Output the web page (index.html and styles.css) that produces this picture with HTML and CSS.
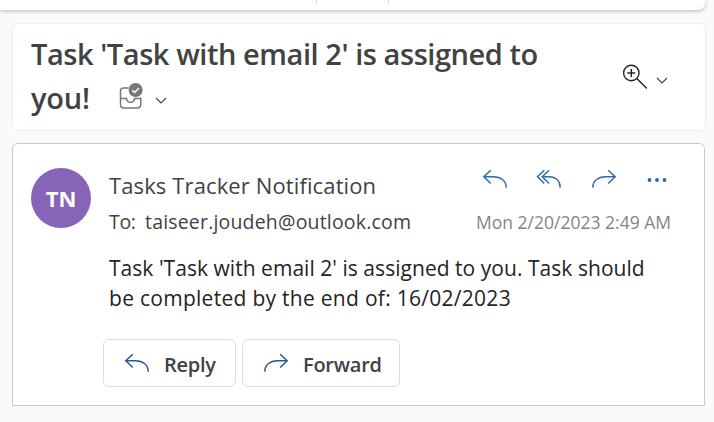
FILE: index.html
```html
<!DOCTYPE html>
<html lang="en">
<head>
<meta charset="utf-8">
<title>Mail</title>
<link rel="stylesheet" href="styles.css">
</head>
<body>
<svg class="defs" width="0" height="0" aria-hidden="true">
  <symbol id="reply" viewBox="0 0 26 20"><path d="M8.8 1.2 1.8 7.7 8.8 14.5M2 7.7H11.5C18.5 7.7 24.2 11.5 24.2 18.7"/></symbol>
  <symbol id="reply-all" viewBox="0 0 26 20"><path d="M8.2 1.2 1.5 7.7 8.2 14.5M13 1.2 6.3 7.7 13 14.5M6.5 7.7H13C19.5 7.7 24.2 11.5 24.2 18.7"/></symbol>
  <symbol id="forward" viewBox="0 0 26 20"><path d="M17.2 1.2 24.2 7.7 17.2 14.5M24 7.7H14.5C7.5 7.7 1.8 11.5 1.8 18.7"/></symbol>
  <symbol id="chevron" viewBox="0 0 12 8"><path d="M1 1 6 6 11 1"/></symbol>
</svg>
<div class="toolbar"><span class="divider"></span><span class="divider"></span></div>
<header class="subject">
  <h1 class="title">
    <span class="title-first">Task 'Task with email 2' is assigned to</span>
    <span class="title-row"><span class="title-last">you!</span>
      <svg class="inbox" viewBox="0 0 26 28"><path d="M10.5 6H5.5Q2.500 6 2.500 9V22.500Q2.500 26 6 26H19Q22.800 26 22.800 22.500V15.500M2.500 16.500H8.500C9 21.500 16 21.500 16.500 16.500H22.500"/><circle cx="17.600" cy="8" r="7"/><path class="tick" d="M14.200 8.200 16.600 10.500 21 6"/></svg>
      <svg class="chevron" viewBox="0 0 12 8"><use href="#chevron"/></svg>
    </span>
  </h1>
  <div class="zoom">
    <svg class="magnifier" viewBox="0 0 26 26"><circle cx="9.300" cy="9" r="7.700"/><path d="M9.300 5V13M5.300 9H13.300M14.800 14.500 24.800 24.500"/></svg>
    <svg class="chevron" viewBox="0 0 12 8"><use href="#chevron"/></svg>
  </div>
</header>
<main class="message">
  <div class="avatar">TN</div>
  <div class="content">
    <div class="line top">
      <span class="sender">Tasks Tracker Notification</span>
      <div class="actions">
        <svg class="arrow"><use href="#reply"/></svg>
        <svg class="arrow"><use href="#reply-all"/></svg>
        <svg class="arrow"><use href="#forward"/></svg>
        <svg class="dots" viewBox="0 0 20 6"><circle cx="2.500" cy="3" r="1.900"/><circle cx="10" cy="3" r="1.900"/><circle cx="17.500" cy="3" r="1.900"/></svg>
      </div>
    </div>
    <div class="line meta">
      <span class="to">To:</span><span class="address">taiseer.joudeh@outlook.com</span>
      <time class="date">Mon 2/20/2023 2:49 AM</time>
    </div>
    <p class="body"><span class="body-a">Task 'Task with email 2' is assigned to you. Task should</span><br><span class="body-b">be completed by the end of: 16/02/2023</span></p>
    <div class="buttons">
      <button class="button reply"><svg class="arrow"><use href="#reply"/></svg><span>Reply</span></button>
      <button class="button forward"><svg class="arrow"><use href="#forward"/></svg><span>Forward</span></button>
    </div>
  </div>
</main>
</body>
</html>
```
FILE: styles.css
```css
* { box-sizing: border-box; }
body { margin: 0; height: 422px; overflow: hidden; background: #fafafa; color: #424242; font-family: "Open Sans", "Noto Sans", sans-serif; white-space: nowrap; }
svg { display: block; flex: none; fill: none; }
.defs { position: absolute; }
.toolbar { display: flex; gap: 71px; width: 705px; height: 10px; padding-left: 316px; background: #fff; border-radius: 0 0 7px 0; box-shadow: 0 1px 4px rgba(0,0,0,.28); }
.divider { width: 1px; height: 4px; background: #d6d6d6; }
.subject { display: flex; width: 694px; height: 108px; margin: 13px 0 0 12px; padding: 8px 0 0 18px; background: #fff; border: 1px solid #ededed; border-radius: 6px; }
.title { width: 591px; margin: 0; font-size: 29px; font-weight: 600; line-height: 44px; letter-spacing: -.44px; }
.title-first { display: block; }
.title-row { display: flex; height: 44px; }
.title-last { width: 87px; letter-spacing: -.2px; }
.inbox { width: 26px; height: 28px; margin: 6px 11px 0 0; stroke: #777; stroke-width: 1.5; }
.inbox circle { fill: #777; stroke: none; }
.inbox .tick { stroke: #fff; }
.chevron { width: 12px; height: 8px; stroke: #424242; stroke-width: 1.1; }
.title .chevron { margin-top: 21px; }
.zoom { display: flex; padding-top: 32px; }
.magnifier { width: 26px; height: 26px; margin-right: 8px; stroke: #242424; stroke-width: 1.4; }
.zoom .chevron { margin-top: 13px; }
.message { display: flex; width: 693px; height: 263px; margin: 12px 0 0 12px; padding: 24px 0 0 18px; background: #fff; border: 1px solid #c9c9c9; border-radius: 6px 6px 0 0; }
.avatar { display: flex; flex: none; align-items: center; justify-content: center; width: 60px; height: 60px; margin-right: 18px; border-radius: 50%; background: #8764b8; color: #fff; font-size: 22px; font-weight: 700; }
.content { width: 562px; }
.line { display: flex; justify-content: space-between; }
.top { height: 36px; line-height: 34px; font-size: 22px; }
.sender { letter-spacing: .12px; }
.actions { display: flex; gap: 28.500px; padding-top: 1px; }
.arrow { width: 26px; height: 20px; stroke: #2f69b3; stroke-width: 1.5; }
.dots { width: 20px; height: 6px; margin: 8px 4px 0 2px; fill: #2464b4; }
.meta { height: 36px; line-height: 36px; font-size: 19.500px; }
.to { width: 36px; letter-spacing: -.3px; }
.address { letter-spacing: .18px; }
.date { margin-left: auto; color: #858585; font-size: 17.500px; }
.body { height: 60px; margin: 13px 0 0; line-height: 30px; font-size: 21px; color: #242424; }
.body-a { letter-spacing: .04px; }
.body-b { letter-spacing: .28px; }
.buttons { display: flex; gap: 6px; margin: 26px 0 0 -6px; }
.button { display: flex; align-items: center; height: 48px; padding: 2px 0 0 20px; gap: 14px; background: #fff; border: 1px solid #dcdcdc; border-radius: 6px; color: #424242; font: 600 20px "Open Sans", "Noto Sans", sans-serif; letter-spacing: -.25px; }
.button .arrow { stroke: #2b579a; margin-top: -3px; }
.reply { width: 133px; }
.forward { width: 158px; }
```
